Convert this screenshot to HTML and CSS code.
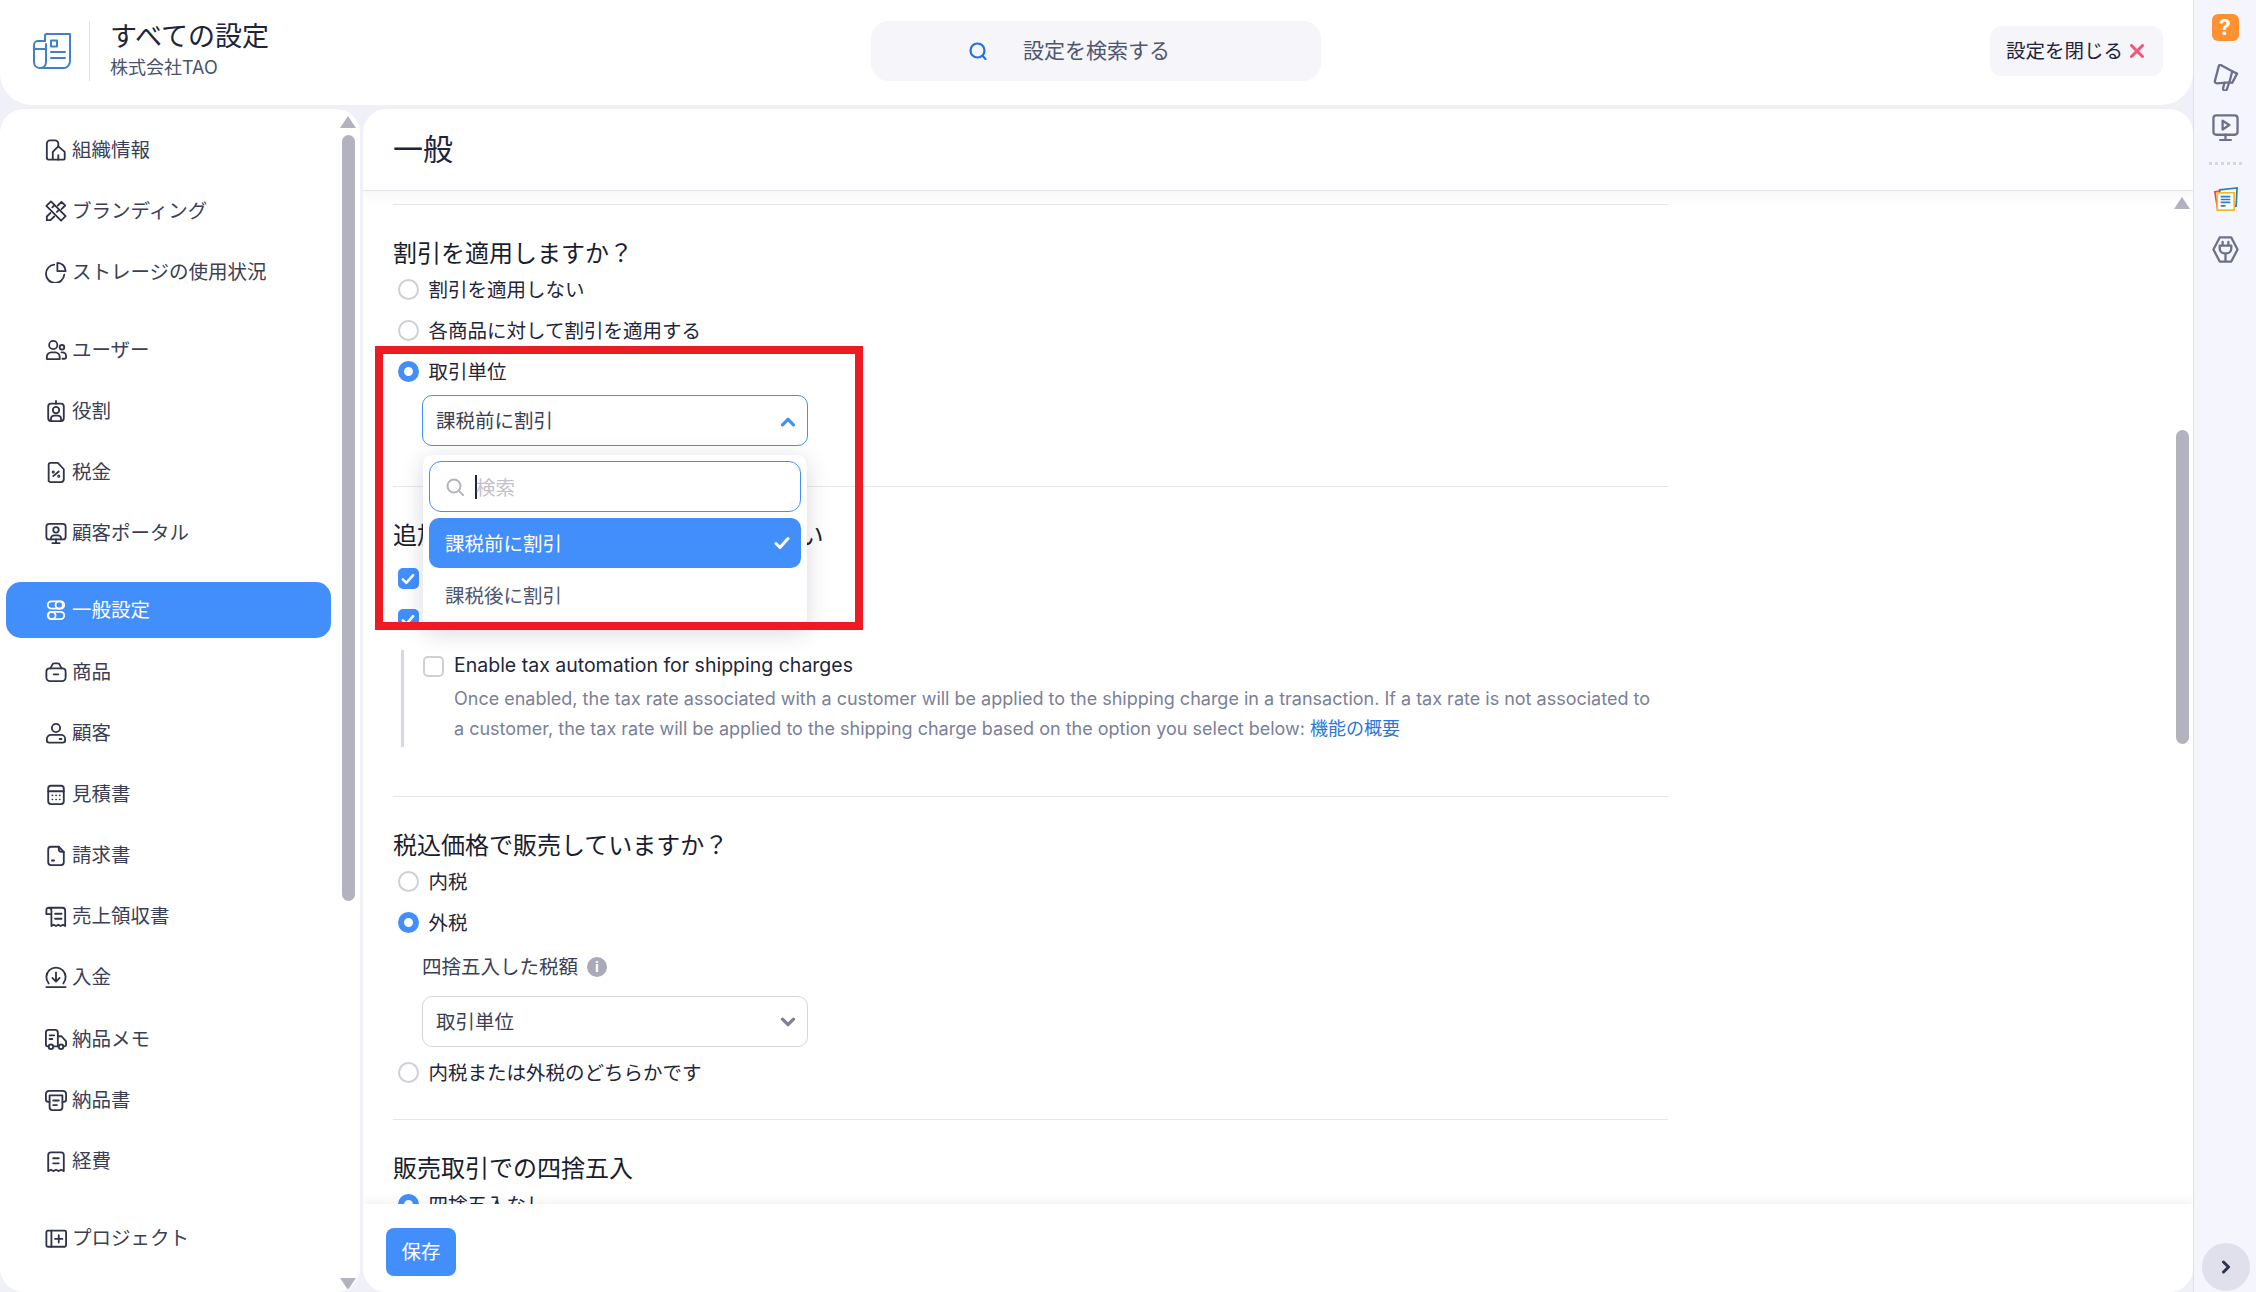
FILE: index.html
```html
<!DOCTYPE html>
<html lang="ja">
<head>
<meta charset="utf-8">
<title>すべての設定</title>
<link rel="stylesheet" href="styles.css">
</head>
<body>
<div class="app">
  <div class="main">
    <header class="topbar">
      <div class="brand">
        <svg class="brand-icon" viewBox="0 0 38 38" fill="none" stroke="#3f83c4" stroke-width="2" stroke-linejoin="round" stroke-linecap="round"><path d="M12 9V3.500c0-1 .8-1.500 1.500-1.500H37v27c0 3.500-2.500 7-6.500 7H7"/><path d="M12 9H5c-2 0-4 1.800-4 4v17c0 3.500 2.500 6 6 6s6-2.500 6-6V12"/><path d="M1 17h11"/><rect x="18" y="8.500" width="6" height="6"/><path d="M18 20h14M18 26h14"/></svg>
        <div class="brand-text">
          <div class="brand-title">すべての設定</div>
          <div class="brand-sub">株式会社TAO</div>
        </div>
      </div>
      <div class="top-search">
        <svg class="top-search-icon" viewBox="0 0 18 18" fill="none" stroke="#2472e0" stroke-width="2.200" stroke-linecap="round"><circle cx="8.500" cy="8.500" r="7"/><path d="M13.500 13.800 16.500 17"/></svg>
        <span>設定を検索する</span>
      </div>
      <button class="close-btn">設定を閉じる<svg class="close-x" viewBox="0 0 14 14" fill="none" stroke="#f6547a" stroke-width="3" stroke-linecap="round"><path d="M1.500 1.500l11 11M12.500 1.500l-11 11"/></svg></button>
    </header>

    <div class="panes">
      <aside class="sidebar">
        <nav class="nav">
          <a class="nav-item"><svg class="ni" viewBox="0 0 24 24"><path d="M2 20.500V5a3.500 3.500 0 0 1 3.500-3.500H11A3.500 3.500 0 0 1 14.500 5v3"/><path d="M2 20.500a2 2 0 0 0 2 2h16.500a1 1 0 0 0 1-1V14l-7-6-6 6v8.500"/><path d="M14.500 22.500v-5"/></svg>組織情報</a>
          <a class="nav-item"><svg class="ni" viewBox="0 0 24 24"><path d="M6.500 1.500 1.500 6.500l16 16 5-5z"/><path d="M14 6l4-4 4 4-4 4"/><path d="M6 14l-4 4v4h4l4-4"/><path d="M8 8l2-2M13 13l2-2"/></svg>ブランディング</a>
          <a class="nav-item"><svg class="ni" viewBox="0 0 24 24"><path d="M10 4a10 10 0 1 0 11 11"/><path d="M13.500 2a9 9 0 0 1 9 9h-9z"/></svg>ストレージの使用状況</a>

          <a class="nav-item gap"><svg class="ni" viewBox="0 0 24 24"><circle cx="9" cy="6.500" r="4.500"/><path d="M2 21.500v-2a5 5 0 0 1 5-5h4a5 5 0 0 1 5 5v2.500H3a1 1 0 0 1-1-.5z"/><circle cx="18.500" cy="9" r="2.500"/><path d="M18 14.500h1a4 4 0 0 1 4 4v1a2 2 0 0 1-2 2h-2"/></svg>ユーザー</a>
          <a class="nav-item"><svg class="ni" viewBox="0 0 24 24"><rect x="3.500" y="4" width="17" height="19" rx="3"/><path d="M12 1v3"/><circle cx="12" cy="11" r="3.500"/><path d="M6.500 22v-1.500a3.500 3.500 0 0 1 3.500-3.500h4a3.500 3.500 0 0 1 3.500 3.500V22"/></svg>役割</a>
          <a class="nav-item"><svg class="ni" viewBox="0 0 24 24"><path d="M6 2h8l6.500 7v11a3 3 0 0 1-3 3H6a3 3 0 0 1-2-1V4a2 2 0 0 1 2-2z"/><path d="M9 16.500l6-5"/><circle cx="9" cy="12" r=".7"/><circle cx="15" cy="16.500" r=".7"/></svg>税金</a>
          <a class="nav-item"><svg class="ni" viewBox="0 0 24 24"><rect x="1.500" y="2" width="21" height="17" rx="3"/><circle cx="12" cy="8.500" r="3"/><path d="M6.500 19v-1a3.500 3.500 0 0 1 3.500-3.500h4a3.500 3.500 0 0 1 3.500 3.500v1M12 19v4M8 23h8"/></svg>顧客ポータル</a>

          <a class="nav-item gap active"><svg class="ni" viewBox="0 0 24 24"><rect x="3" y="2.500" width="18" height="8" rx="4"/><circle cx="15.500" cy="6.500" r="4"/><rect x="3" y="14" width="18" height="8" rx="4"/><circle cx="7.500" cy="18" r="4"/></svg>一般設定</a>
          <a class="nav-item"><svg class="ni" viewBox="0 0 24 24"><path d="M5 8h14a3.500 3.500 0 0 1 3.500 3.500V18a4 4 0 0 1-4 4h-13a4 4 0 0 1-4-4v-6.500A3.500 3.500 0 0 1 5 8z"/><path d="M6 8l2-4a2.500 2.500 0 0 1 2-1.500h4a2.500 2.500 0 0 1 2 1.500l2 4M9.500 14.500h5"/></svg>商品</a>
          <a class="nav-item"><svg class="ni" viewBox="0 0 24 24"><circle cx="12" cy="6.500" r="4.500"/><path d="M6.500 14h11a4.500 4.500 0 0 1 4.500 4.500V20a2.500 2.500 0 0 1-2.500 2.500h-15A2.500 2.500 0 0 1 2 20v-1.500A4.500 4.500 0 0 1 6.500 14z"/><path d="M16 18.500h2"/></svg>顧客</a>
          <a class="nav-item"><svg class="ni" viewBox="0 0 24 24"><rect x="3.500" y="3" width="17" height="20" rx="3"/><path d="M3.500 9h17"/><path class="dots" d="M8 13.500h.2M12 13.500h.2M16 13.500h.2M8 18h.2M12 18h.2M16 18h.2"/></svg>見積書</a>
          <a class="nav-item"><svg class="ni" viewBox="0 0 24 24"><path d="M6.500 3H15l5.500 5.500V20a3 3 0 0 1-3 3H6.500a3 3 0 0 1-3-3V6a3 3 0 0 1 3-3z"/><path d="M15 3v2.500A3 3 0 0 0 18 8.500h2.500M7.500 18H10"/></svg>請求書</a>
          <a class="nav-item"><svg class="ni" viewBox="0 0 24 24"><path d="M4 3h15a3 3 0 0 1 3 3v17l-2.500-1.500L17 23l-2.500-1.500L12 23l-2.500-1.500L7 23V6a3 3 0 0 0-3-3 2.500 2.500 0 0 0-2.500 2.500V10H7"/><path d="M11 9.500h7M11 15h7"/></svg>売上領収書</a>
          <a class="nav-item"><svg class="ni" viewBox="0 0 24 24"><path d="M4 19a10.500 10.500 0 1 1 16 0"/><path d="M12 7v10M8 13l4 4 4-4M1.500 23h21"/></svg>入金</a>
          <a class="nav-item"><svg class="ni" viewBox="0 0 24 24"><path d="M4 20H3a2 2 0 0 1-2-2V5a3 3 0 0 1 3-3h7a3 3 0 0 1 3 3v15H9"/><path d="M14 9h4l5 5.500V18a2 2 0 0 1-2 2h-1M15 20h-1"/><circle cx="6.500" cy="20.500" r="2.500"/><circle cx="17.500" cy="20.500" r="2.500"/><path d="M5 8h5M5 12h3"/></svg>納品メモ</a>
          <a class="nav-item"><svg class="ni" viewBox="0 0 24 24"><path d="M5 14H3.500A2.500 2.500 0 0 1 1 11.500v-6A3.500 3.500 0 0 1 4.500 2h15A3.500 3.500 0 0 1 23 5.500v6a2.500 2.500 0 0 1-2.500 2.500H19"/><path d="M5 7h14v13a3 3 0 0 1-3 3H8a3 3 0 0 1-3-3z"/><path d="M9 12.500h6M9 17.500h4"/></svg>納品書</a>
          <a class="nav-item"><svg class="ni" viewBox="0 0 24 24"><path d="M6.500 2.500h11a3 3 0 0 1 3 3V23l-3-1.500L15 23l-3-1.500L9 23l-2.500-1.500L3.500 23V5.500a3 3 0 0 1 3-3z"/><path d="M9 9h6M9 14.500h6"/></svg>経費</a>

          <a class="nav-item gap"><svg class="ni" viewBox="0 0 24 24"><path d="M3 4h18.500a1.500 1.500 0 0 1 1.500 1.500V20a1.500 1.500 0 0 1-1.500 1.500H3A1.500 1.500 0 0 1 1.500 20V5.500A1.500 1.500 0 0 1 3 4z"/><path d="M7 4v17.500M15 9v8M11 13h8"/></svg>プロジェクト</a>
          <a class="nav-item nav-last"><svg class="ni" viewBox="0 0 24 24"><rect x="3" y="3" width="18" height="19" rx="3"/></svg>銀行業務</a>
        </nav>
        <div class="sb sb-side">
          <span class="sb-up"></span>
          <span class="sb-thumb sb-thumb-side"></span>
          <span class="sb-down sb-down-side"></span>
        </div>
      </aside>

      <section class="content">
        <div class="title-bar"><h1 class="page-title">一般</h1></div>
        <div class="scroller">
          <div class="form">
            <hr class="rule">
            <h2 class="heading">割引を適用しますか？</h2>
            <label class="row"><span class="radio"></span>割引を適用しない</label>
            <label class="row"><span class="radio"></span>各商品に対して割引を適用する</label>
            <label class="row"><span class="radio on"></span>取引単位</label>
            <div class="select-wrap sel-first">
              <div class="select open">
                <span>課税前に割引</span>
                <svg class="chev" viewBox="0 0 14 10" fill="none" stroke="#428ffc" stroke-width="3" stroke-linecap="round" stroke-linejoin="round"><path d="M2 8l5-5 5 5"/></svg>
              </div>
              <div class="dropdown">
                <div class="dd-search">
                  <svg class="dd-icon" viewBox="0 0 18 18" fill="none" stroke="#b3b2bf" stroke-width="2" stroke-linecap="round"><circle cx="8" cy="8" r="6.500"/><path d="M13 13l4 4"/></svg>
                  <span class="caret"></span><span class="placeholder">検索</span>
                </div>
                <div class="dd-opt selected"><span>課税前に割引</span>
                  <svg class="dd-check" viewBox="0 0 16 14" fill="none" stroke="#fff" stroke-width="3" stroke-linecap="round" stroke-linejoin="round"><path d="M2 7.500l4 4 8-9"/></svg>
                </div>
                <div class="dd-opt">課税後に割引</div>
              </div>
            </div>

            <hr class="rule after-sel">
            <h2 class="heading">追加の税金の設定を有効にしてください</h2>
            <div class="checks">
              <div class="row"><span class="check on"><svg viewBox="0 0 16 14" fill="none" stroke="#fff" stroke-width="3" stroke-linecap="round" stroke-linejoin="round"><path d="M2 7.500l4 4 8-9"/></svg></span></div>
              <div class="row"><span class="check on"><svg viewBox="0 0 16 14" fill="none" stroke="#fff" stroke-width="3" stroke-linecap="round" stroke-linejoin="round"><path d="M2 7.500l4 4 8-9"/></svg></span></div>
            </div>
            <div class="sub-block">
              <div class="sub-head"><span class="check"></span>Enable tax automation for shipping charges</div>
              <p class="sub-desc">Once enabled, the tax rate associated with a customer will be applied to the shipping charge in a transaction. If a tax rate is not associated to a customer, the tax rate will be applied to the shipping charge based on the option you select below: <a class="link">機能の概要</a></p>
            </div>

            <hr class="rule after-sub">
            <h2 class="heading">税込価格で販売していますか？</h2>
            <label class="row"><span class="radio"></span>内税</label>
            <label class="row"><span class="radio on"></span>外税</label>
            <div class="field-label">四捨五入した税額<span class="info">i</span></div>
            <div class="select-wrap">
              <div class="select">
                <span>取引単位</span>
                <svg class="chev" viewBox="0 0 14 10" fill="none" stroke="#7f8098" stroke-width="3" stroke-linecap="round" stroke-linejoin="round"><path d="M2 2l5 5 5-5"/></svg>
              </div>
            </div>
            <label class="row row-after-sel"><span class="radio"></span>内税または外税のどちらかです</label>

            <hr class="rule after-tax">
            <h2 class="heading">販売取引での四捨五入</h2>
            <label class="row"><span class="radio on"></span>四捨五入なし</label>
          </div>
          <div class="redbox"></div>
          <div class="sb sb-content">
            <span class="sb-up"></span>
            <span class="sb-thumb sb-thumb-content"></span>
          </div>
        </div>
        <footer class="footer"><button class="save">保存</button></footer>
      </section>
    </div>
  </div>

  <aside class="rail">
    <div class="help">?</div>
    <svg class="rail-icon" viewBox="0 0 28 28" fill="none" stroke="#6d7188" stroke-width="2.400" stroke-linejoin="round" stroke-linecap="round"><path d="M9 1 21 7.500 18 19 5 20a2 2 0 0 1-2-2.500L7 2.500A1.500 1.500 0 0 1 9 1z"/><path d="M21 7.500l5 2.500-5 9.500-3 -.5"/><path d="M13 19.500l-1.500 5.500a2 2 0 0 0 4 1l2-6"/></svg>
    <svg class="rail-icon" viewBox="0 0 28 28" fill="none" stroke="#6d7188" stroke-width="2.400" stroke-linejoin="round" stroke-linecap="round"><rect x="1.500" y="1.500" width="25" height="20" rx="3"/><path d="M11 7l7 4.500-7 4.500zM14 21.500V27M8.500 27h11"/></svg>
    <div class="rail-dots"></div>
    <svg class="rail-icon" viewBox="0 0 28 28" fill="none" stroke-width="1.800"><path d="M3 6l7-1v20H6z" fill="#fff" stroke="#e5484d"/><path d="M8 4l18-2-1 19-17 1z" fill="#fff" stroke="#2f7dc8"/><rect x="5.500" y="7" width="17.500" height="18" fill="#fff" stroke="#f8b62d"/><path d="M9 11h10M9 14h10M9 17h10M9 20.500h5" stroke="#2f7dc8"/></svg>
    <svg class="rail-icon" viewBox="0 0 28 28" fill="none" stroke="#6d7188" stroke-width="2.400" stroke-linejoin="round" stroke-linecap="round"><path d="M8 1.500h12l6.500 12.500L20 26.500H8L1.500 14z"/><path d="M8 10h12v3a5 5 0 0 1-5 5h-2a5 5 0 0 1-5-5zM11 10V6M17 10V6M14 18v8"/></svg>
    <button class="collapse"><svg viewBox="0 0 10 14" fill="none" stroke="#2d3249" stroke-width="3" stroke-linecap="round" stroke-linejoin="round"><path d="M2.500 2l5 5-5 5"/></svg></button>
  </aside>
</div>
</body>
</html>
```

FILE: styles.css
```css
* { box-sizing: border-box; }
html, body { margin: 0; height: 100%; overflow: hidden; }
body {
  font-family: "Inter", "Noto Sans CJK JP", sans-serif;
  font-size: 19.5px;
  color: #20243a;
  background: #f0f0f9;
}
button { font: inherit; border: 0; padding: 0; }

.app { display: grid; grid-template-columns: 1fr 63px; grid-template-rows: 1292px; width: 2256px; height: 1292px; }
.main { display: flex; flex-direction: column; gap: 4px; min-width: 0; min-height: 0; }

/* top bar */
.topbar {
  height: 105px; flex: none; background: #fff; border-radius: 0 0 32px 32px;
  display: flex; align-items: center; justify-content: space-between;
  padding: 0 30px 3px 33px; position: relative;
}
.brand { display: flex; align-items: center; width: 838px; }
.brand-icon { width: 38px; height: 38px; margin-right: 18px; }
.brand-text { border-left: 1px solid #dedee6; padding-left: 20px; height: 60px; }
.brand-title { font-size: 27px; line-height: 30px; color: #20243a; margin-top: 1px; }
.brand-sub { font-size: 18px; line-height: 26px; color: #4b516b; margin-top: 3px; }

.top-search {
  width: 450px; height: 60px; background: #f5f5fa; border-radius: 18px;
  display: flex; align-items: center; padding: 0 0 5px 98px; gap: 36px;
  font-size: 21px; color: #50566f;
}
.top-search-icon { width: 18px; height: 18px; margin-top: 5px; }
.close-btn {
  width: 173px; height: 50px; background: #f5f5fa; border-radius: 12px; margin-left: auto;
  display: flex; align-items: center; padding: 0 0 3px 16px; gap: 7px; color: #20243a;
}
.close-x { width: 14px; height: 14px; margin-top: 3px; }

/* panes */
.panes { flex: 1; display: flex; gap: 3px; min-height: 0; }
.sidebar {
  width: 360px; background: #fff; border-radius: 24px; position: relative; overflow: hidden;
  padding-top: 13px;
}
.nav { display: flex; flex-direction: column; }
.nav-item {
  flex: none; width: 325px; height: 56px; margin: 0 0 5.2px 6px; padding: 0 0 3px 39px;
  display: flex; align-items: center; gap: 5px; border-radius: 15px; color: #3a3f56;
}
.nav-item.gap { margin-top: 16px; }
.nav-item.nav-last { margin-top: 4px; }
.nav-item.active { background: #428ffc; color: #fff; }
.ni {
  width: 22px; height: 22px; flex: none; margin-top: 3px; fill: none; stroke: #2f344a;
  stroke-width: 2; stroke-linejoin: round; stroke-linecap: round;
}
.active .ni { stroke: #fff; }
.ni .dots { stroke-width: 1.800; }

/* scrollbars */
.sb { position: absolute; display: flex; flex-direction: column; align-items: center; }
.sb-side { right: 4px; top: 7px; bottom: 2px; width: 16px; }
.sb-content { right: 3px; top: 6px; width: 16px; }
.sb-up, .sb-down { width: 0; height: 0; border-left: 8px solid transparent; border-right: 8px solid transparent; }
.sb-up { border-bottom: 12px solid #b3b2bf; }
.sb-down { border-top: 12px solid #b3b2bf; }
.sb-down-side { margin-top: auto; }
.sb-thumb { width: 13px; background: #b3b2bf; border-radius: 7px; }
.sb-thumb-side { height: 766px; margin-top: 7px; }
.sb-thumb-content { height: 314px; margin-top: 221px; }

/* content */
.content {
  flex: 1; min-width: 0; background: #fff; border-radius: 24px; overflow: hidden;
  display: flex; flex-direction: column;
}
.title-bar {
  height: 82px; flex: none; display: flex; align-items: center; padding: 0 30px 5px 30px;
  border-bottom: 1px solid #e4e4ec; box-shadow: 0 6px 10px rgba(40, 40, 70, .04); position: relative; z-index: 2;
}
.page-title { margin: 0; font-size: 30px; font-weight: 400; color: #20243a; }
.scroller { flex: 1; min-height: 0; position: relative; overflow: hidden; }
.form { width: 1305px; padding: 13px 0 0 30px; }
.rule { margin: 0; border: 0; height: 1px; background: #e6e6ea; }
.heading { margin: 32px 0 -2px; font-size: 24px; font-weight: 400; line-height: 33px; color: #1a1d2e; }
.row { display: flex; align-items: center; height: 41px; padding-left: 4.500px; gap: 10px; color: #23263a; position: relative; }
.radio { width: 21px; height: 21px; border-radius: 50%; border: 2px solid #cfcfd5; background: #fff; flex: none; margin-top: 2px; }
.radio.on { border: 6px solid #428ffc; }
.check {
  width: 21px; height: 21px; border-radius: 5px; border: 2px solid #cfcfd5; background: #fff; flex: none;
  display: flex; align-items: center; justify-content: center;
}
.check.on { background: #428ffc; border-color: #428ffc; }
.check svg { width: 14px; height: 12px; }

/* selects */
.select-wrap { position: relative; width: 386px; margin-left: 29px; }
.sel-first { margin-top: 4px; }
.select {
  height: 51px; border: 1.500px solid #d5d5de; border-radius: 10px; background: #fff;
  display: flex; align-items: center; justify-content: space-between; padding: 0 11px 3px 13px; color: #3a3f56;
}
.select.open { border-color: #428ffc; }
.chev { width: 16px; height: 11px; margin-top: 5px; }
.dropdown {
  position: absolute; left: 1px; top: 60px; width: 384px; height: 174px; background: #fff; border-radius: 10px;
  box-shadow: 0 4px 22px rgba(50, 50, 90, .18); padding: 6px; z-index: 3;
}
.dd-search {
  height: 51px; border: 1.500px solid #428ffc; border-radius: 12px; display: flex; align-items: center; padding-left: 16px;
}
.dd-icon { width: 18px; height: 18px; margin-right: 11px; }
.caret { width: 2px; height: 24px; background: #20243a; margin-right: -1px; }
.placeholder { color: #c2c1cc; }
.dd-opt { height: 50px; border-radius: 10px; display: flex; align-items: center; justify-content: space-between; padding: 0 11px 1px 16px; color: #50566f; margin-top: 2px; }
.dd-opt.selected { background: #428ffc; color: #fff; margin-top: 6px; }
.dd-check { width: 16px; height: 14px; }

.redbox {
  position: absolute; left: 12px; top: 155px; width: 488px; height: 284px;
  border: 8px solid #ed1c24; z-index: 4; pointer-events: none;
}

.after-sel { margin-top: 40px; }
.checks { margin-top: 8px; }
.sub-block { margin: 10px 0 0 8px; border-left: 3px solid #d8d8e4; height: 97px; padding: 0 0 0 19px; width: 1267px; }
.sub-head { display: flex; align-items: center; gap: 10px; height: 30px; color: #23263a; }
.sub-head .check { margin-top: 2px; }
.sub-desc { margin: 4px 6px 0 31px; line-height: 30px; font-size: 18px; color: #7b8099; }
.link { color: #2a76d8; }
.after-sub { margin-top: 49px; }
.field-label { margin: 10px 0 0 29px; height: 30px; line-height: 30px; color: #3a3f56; display: flex; align-items: center; gap: 9px; }
.info {
  width: 20px; height: 20px; border-radius: 50%; background: #a9a9b8; color: #fff; font-size: 14px; font-weight: 700;
  display: flex; align-items: center; justify-content: center;
}
.select-wrap:not(.sel-first) { margin-top: 14px; }
.row-after-sel { margin-top: 4px; }
.after-tax { margin-top: 27px; }

/* footer */
.footer {
  height: 88px; flex: none; background: #fff; padding: 24px 0 0 23px; position: relative; z-index: 2;
  box-shadow: 0 -4px 8px rgba(40, 40, 70, .05);
}
.save { width: 70px; height: 48px; background: #428ffc; color: #fff; border-radius: 8px; padding-bottom: 3px; }

/* right rail */
.rail {
  background: #f5f6fd; border-left: 1px solid #e0e0ea; display: flex; flex-direction: column; align-items: center;
  padding-top: 14px; position: relative;
}
.help {
  width: 27px; height: 27px; background: #ff9130; border-radius: 6px; color: #fff; font-weight: 700; font-size: 21px;
  display: flex; align-items: center; justify-content: center; margin-bottom: 23px;
}
.rail-icon { width: 27px; height: 27px; margin-bottom: 23px; flex: none; }
.rail-dots { width: 33px; height: 0; border-top: 3px dotted #d6d6de; margin: -2px 0 21px; }
.collapse {
  position: absolute; left: 8px; bottom: 1px; width: 48px; height: 48px; border-radius: 50%; background: #e0e0ec;
  display: flex; align-items: center; justify-content: center;
}
.collapse svg { width: 10px; height: 14px; }
```
